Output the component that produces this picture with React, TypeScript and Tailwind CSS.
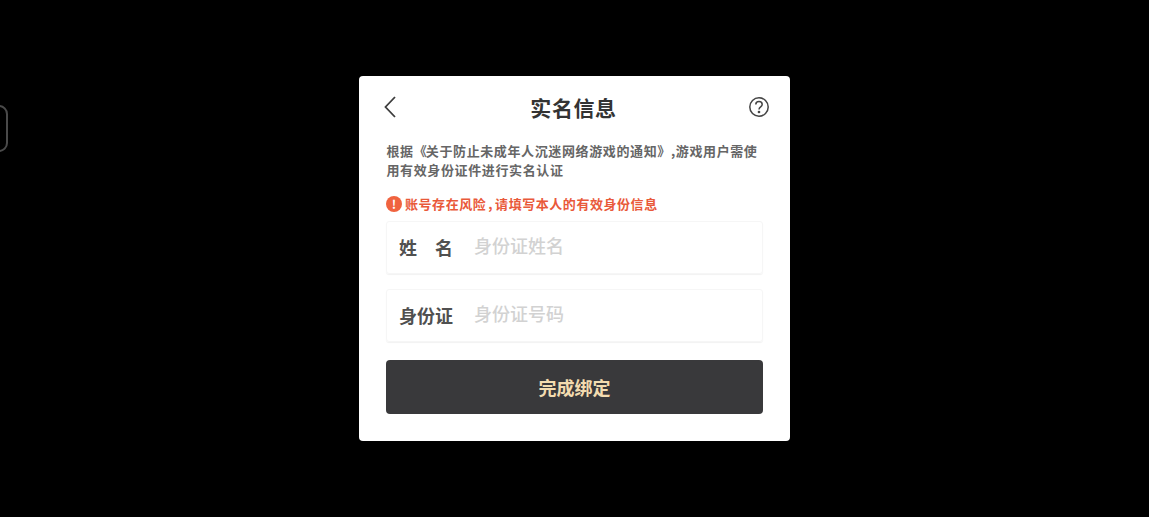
import React from "react";

const font = { fontFamily: '"Noto Sans CJK SC", "Noto Sans", sans-serif' };

function Field({ label, placeholder }: { label: React.ReactNode; placeholder: string }) {
  return (
    <div className="flex h-[53px] items-center rounded-[3px] border border-[#f6f6f6] pl-[12px] shadow-[0_1px_1px_#f2f2f2]">
      <span className="-mt-[1px] w-[75px] text-[18px] leading-[24px] font-bold text-[#505050]">{label}</span>
      <span className="-mt-[6px] text-[18px] leading-[24px] font-medium text-[#d2d2d2]">{placeholder}</span>
    </div>
  );
}

export default function App() {
  return (
    <div style={font} className="relative flex h-[517px] w-[1149px] items-center justify-center overflow-hidden bg-black">
      <div className="absolute top-[105px] -left-[14px] h-[47px] w-[22px] rounded-[9px] border-2 border-[#4a4a4a]" />
      <div className="flex h-[365px] w-[431px] flex-col rounded-[4px] bg-white px-[27px]">
        <div className="flex h-[62px] items-center justify-between">
          <svg width="14" height="24" viewBox="0 0 14 24" className="ml-[-3px]" fill="none" stroke="#3d3d3d" strokeWidth="1.8">
            <path d="M12 2 2.5 12 12 22" />
          </svg>
          <span className="-mt-[1px] ml-[2px] text-[21px] leading-[28px] font-bold tracking-[0.6px] text-[#333333]">实名信息</span>
          <svg width="22" height="22" viewBox="0 0 22 22" className="mr-[-7px] -mt-[1px]" fill="none" stroke="#444444" strokeWidth="1.5">
            <circle cx="11" cy="11" r="9.2" />
            <path d="M7.8 8.6c0-1.9 1.4-3 3.2-3s3.2 1.1 3.2 2.8c0 2.4-3.2 2.4-3.2 5" />
            <circle cx="11" cy="16" r="0.6" fill="#444444" />
          </svg>
        </div>
        <p className="mt-[3px] pl-[0.5px] text-[13px] leading-[19px] font-semibold tracking-[0.62px] whitespace-nowrap text-[#666666]">
          根据<span className="tracking-[-1px]">《</span>关于防止未成年人沉迷网络游戏的通知》,游戏用户需使
          <br />
          用有效身份证件进行实名认证
        </p>
        <div className="mt-[15px] flex h-[19px] items-center gap-[3px]">
          <span className="flex h-[16px] w-[16px] items-center justify-center rounded-full bg-[#f0633f] text-[12px] leading-none font-bold text-white">!</span>
          <span className="text-[13px] leading-[19px] font-semibold tracking-[0.55px] whitespace-nowrap text-[#e9593a]">账号存在风险<span className="px-[2px]">,</span>请填写本人的有效身份信息</span>
        </div>
        <div className="mt-[8px] flex flex-col gap-[15px]">
          <Field label={<span className="flex w-[54px] justify-between"><span>姓</span><span>名</span></span>} placeholder="身份证姓名" />
          <Field label="身份证" placeholder="身份证号码" />
        </div>
        <button className="mt-[18px] flex h-[54px] items-center justify-center rounded-[4px] bg-[#39393b] pt-[1px] text-[18px] font-bold text-[#f3dcb0]">
          完成绑定
        </button>
      </div>
    </div>
  );
}
